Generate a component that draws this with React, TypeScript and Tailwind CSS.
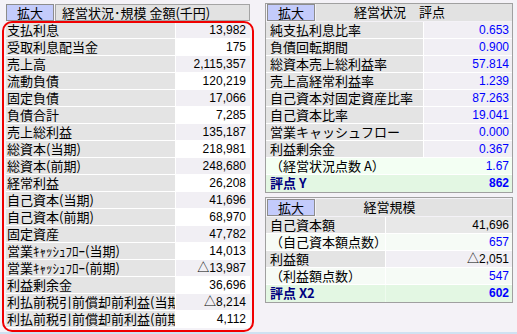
import React from "react";

const leftRows: [string, string][] = [
  ["支払利息", "13,982"],
  ["受取利息配当金", "175"],
  ["売上高", "2,115,357"],
  ["流動負債", "120,219"],
  ["固定負債", "17,066"],
  ["負債合計", "7,285"],
  ["売上総利益", "135,187"],
  ["総資本(当期)", "218,981"],
  ["総資本(前期)", "248,680"],
  ["経常利益", "26,208"],
  ["自己資本(当期)", "41,696"],
  ["自己資本(前期)", "68,970"],
  ["固定資産", "47,782"],
  ["営業ｷｬｯｼｭﾌﾛｰ(当期)", "14,013"],
  ["営業ｷｬｯｼｭﾌﾛｰ(前期)", "△13,987"],
  ["利益剰余金", "36,696"],
  ["利払前税引前償却前利益(当期)", "△8,214"],
  ["利払前税引前償却前利益(前期)", "4,112"],
];

const scoreRows: [string, string][] = [
  ["純支払利息比率", "0.653"],
  ["負債回転期間", "0.900"],
  ["総資本売上総利益率", "57.814"],
  ["売上高経常利益率", "1.239"],
  ["自己資本対固定資産比率", "87.263"],
  ["自己資本比率", "19.041"],
  ["営業キャッシュフロー", "0.000"],
  ["利益剰余金", "0.367"],
];

const NUM = "font-['Liberation_Sans','Noto_Sans_CJK_JP',sans-serif] text-[12px] leading-[17px]";

function Btn() {
  return (
    <div className="w-[48px] h-[17px] bg-[#c3cbfb] border border-[#8c8c8c] flex items-center justify-center text-[13px] leading-[15px] text-black">
      拡大
    </div>
  );
}

export default function App() {
  return (
    <div className="w-[517px] h-[334px] bg-[#f4f2f7] flex flex-col overflow-hidden font-['Noto_Sans_CJK_JP','Noto_Sans',sans-serif]">
      <div className="flex h-[332px]">
        {/* Left panel */}
        <div className="relative w-[254px] pl-[6px] pt-[4px]">
          <div className="flex w-[244px] h-[18px] gap-[1px]">
            <Btn />
            <div className="flex-1 h-[17px] bg-[#e2e2e2] border border-[#a4a4a4] pl-[6px] text-[13px] leading-[15px] text-black whitespace-nowrap">
              経営状況･規模 金額(千円)
            </div>
          </div>
          <div className="w-[244px] flex flex-col">
            {leftRows.map(([l, v], i) => (
              <div key={i} className="flex h-[17px] border-b border-white">
                <div className="w-[170px] bg-[#e4e4e4] pl-[1px] text-[13px] leading-[16px] text-black whitespace-nowrap overflow-hidden border-r border-white">
                  {l}
                </div>
                <div
                  className={`flex-1 text-right pr-[4px] text-black ${NUM} ${
                    i % 2 === 0 ? "bg-[#f1eff4]" : "bg-white"
                  }`}
                >
                  {v}
                </div>
              </div>
            ))}
          </div>
          <div className="absolute left-[2px] top-[21px] w-[252px] h-[311px] border-2 border-[#f00000] rounded-[10px] pointer-events-none" />
        </div>

        {/* Right column */}
        <div className="ml-[11px] w-[248px] flex flex-col">
          <div className="mt-[3px] border border-[#a0a0a0] bg-[#f4f2f7]">
            <div className="flex h-[18px] pl-[1px] gap-[1px]">
              <Btn />
              <div className="flex-1 h-[17px] bg-[#e2e2e2] text-center pr-[29px] text-[13px] leading-[16px] text-black whitespace-nowrap">
                経営状況　評点
              </div>
            </div>
            {scoreRows.map(([l, v], i) => (
              <div key={i} className="flex h-[17px] border-b border-white">
                <div className="w-[158px] bg-[#e4e4e4] pl-[4px] text-[13px] leading-[16px] text-black whitespace-nowrap overflow-hidden border-r border-white">
                  {l}
                </div>
                <div className={`flex-1 bg-[#f1eff4] text-right pr-[3px] text-[#0000ff] ${NUM}`}>{v}</div>
              </div>
            ))}
            <div className="flex h-[17px] border-b border-white bg-[#f3fff3]">
              <div className="w-[158px] pl-[4px] text-[13px] leading-[16px] text-black whitespace-nowrap">
                （経営状況点数 A）
              </div>
              <div className={`flex-1 text-right pr-[3px] text-[#0000ff] ${NUM}`}>1.67</div>
            </div>
            <div className="flex h-[17px] bg-[#e3f7e3]">
              <div className="w-[158px] pl-[4px] text-[13px] leading-[16px] font-bold text-[#000080] whitespace-nowrap">
                評点 Y
              </div>
              <div className={`flex-1 text-right pr-[3px] font-bold text-[#0000ff] ${NUM}`}>862</div>
            </div>
          </div>

          <div className="mt-[4px] border border-[#a0a0a0] bg-[#f4f2f7]">
            <div className="flex h-[19px] pl-[1px] pt-[1px] gap-[1px]">
              <Btn />
              <div className="flex-1 h-[17px] bg-[#e2e2e2] text-center pr-[49px] text-[13px] leading-[16px] text-black whitespace-nowrap">
                経営規模
              </div>
            </div>
            <div className="flex h-[17px] border-b border-white">
              <div className="w-[120px] bg-[#e4e4e4] pl-[4px] text-[13px] leading-[16px] text-black border-r border-white">
                自己資本額
              </div>
              <div className={`flex-1 bg-[#e8e8e8] text-right pr-[3px] text-black ${NUM}`}>41,696</div>
            </div>
            <div className="flex h-[17px] border-b border-white bg-[#f6fbf6]">
              <div className="w-[120px] pl-[4px] text-[13px] leading-[16px] text-black whitespace-nowrap border-r border-white">
                （自己資本額点数）
              </div>
              <div className={`flex-1 text-right pr-[3px] text-[#0000ff] ${NUM}`}>657</div>
            </div>
            <div className="flex h-[17px] border-b border-white">
              <div className="w-[120px] bg-[#e4e4e4] pl-[4px] text-[13px] leading-[16px] text-black border-r border-white">
                利益額
              </div>
              <div className={`flex-1 bg-[#f1eff4] text-right pr-[3px] text-black ${NUM}`}>△2,051</div>
            </div>
            <div className="flex h-[17px] border-b border-white bg-[#f6fbf6]">
              <div className="w-[120px] pl-[4px] text-[13px] leading-[16px] text-black whitespace-nowrap border-r border-white">
                （利益額点数）
              </div>
              <div className={`flex-1 text-right pr-[3px] text-[#0000ff] ${NUM}`}>547</div>
            </div>
            <div className="flex h-[17px] bg-[#e3f7e3]">
              <div className="w-[120px] pl-[4px] text-[13px] leading-[16px] font-bold text-[#000080] whitespace-nowrap border-r border-[#eefbee]">
                評点 X2
              </div>
              <div className={`flex-1 text-right pr-[3px] font-bold text-[#0000ff] ${NUM}`}>602</div>
            </div>
          </div>
        </div>
      </div>
      <div className="h-[2px] bg-[#cfe2f2]" />
    </div>
  );
}
